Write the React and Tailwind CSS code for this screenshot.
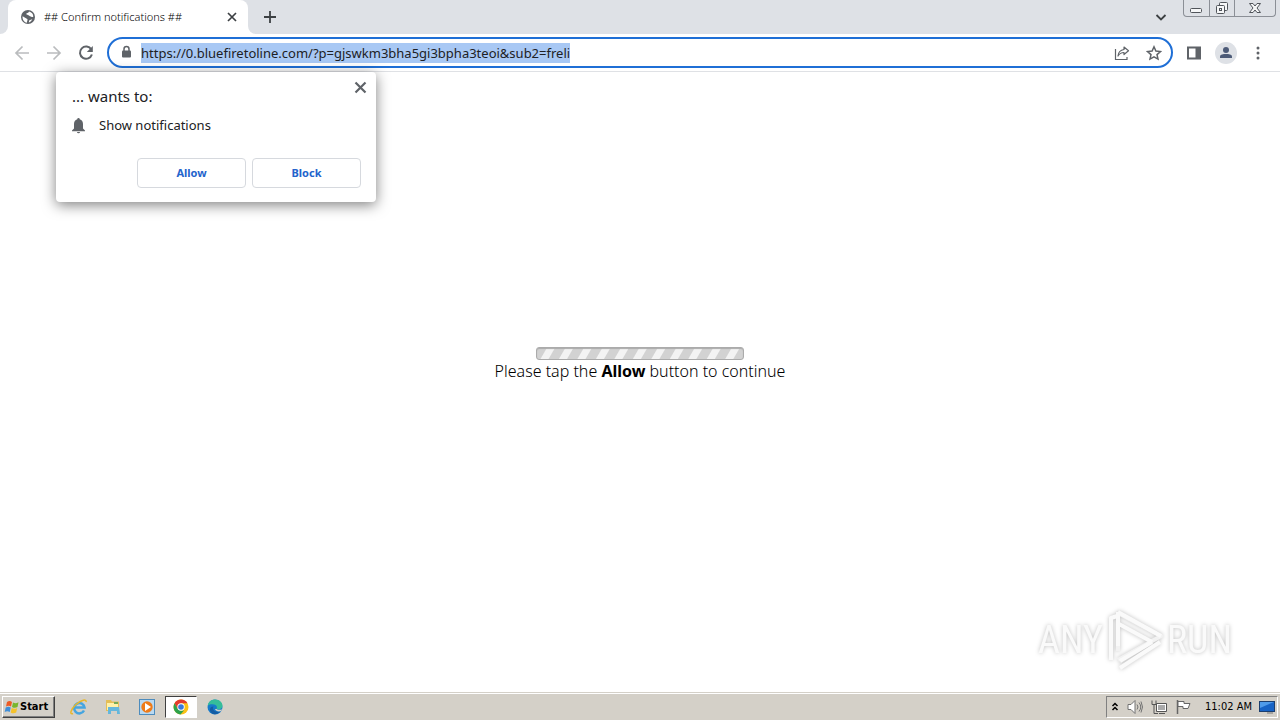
import React from "react";

const url = "https://0.bluefiretoline.com/?p=gjswkm3bha5gi3bpha3teoi&sub2=freli";

function Globe() {
  return (
    <svg className="size-4 shrink-0" viewBox="0 0 16 16" aria-hidden="true">
      <circle cx="8" cy="8" r="7" fill="#5f6368" />
      <path d="M2.6 7.2 6 9.2c1.200.6 1.700.8 1.500 1.800L6.800 13.800C4 13 2.200 10.600 2.600 7.200ZM9 2.500c-.3 1.500-1.300 1.300-2.300 1.700-.8.4-.3 1.500.6 1.600 1.500.2 1.500 1 2.700 1.400 1.500.4 1.800 1.200 3.300.6C13.400 5 11.500 3 9 2.500Zm.3 8.700c1.200-.2 1.800-1 3-1-.7 1.600-1.800 2.700-3.500 3.200Z" fill="#fff" />
    </svg>
  );
}

function TabStrip() {
  return (
    <header className="flex h-[34px] shrink-0 bg-[#dee1e6]">
      <div className="w-2 shrink-0 bg-white">
        <div className="h-full rounded-br-lg bg-[#dee1e6]" />
      </div>
      <div className="flex w-60 shrink-0 items-center rounded-t-lg bg-white pr-2 pl-3">
        <Globe />
        <span className="ml-2 flex-1 whitespace-nowrap text-[11px] font-light text-black">## Confirm notifications ##</span>
        <button aria-label="Close tab" className="flex size-4 items-center justify-center">
          <svg className="size-4" viewBox="0 0 16 16" fill="none" stroke="#3c4043" strokeWidth="1.700"><path d="m4 4 8 8m0-8-8 8" /></svg>
        </button>
      </div>
      <div className="w-2 shrink-0 bg-white">
        <div className="h-full rounded-bl-lg bg-[#dee1e6]" />
      </div>
      <button aria-label="New tab" className="ml-1 flex w-5 items-center justify-center">
        <svg className="size-4" viewBox="0 0 16 16" fill="none" stroke="#3c4043" strokeWidth="1.800"><path d="M8 2v12M2 8h12" /></svg>
      </button>
      <div className="flex-1" />
      <button aria-label="Search tabs" className="mr-3 flex w-5 items-center justify-center">
        <svg className="size-4" viewBox="0 0 16 16" fill="none" stroke="#3c4043" strokeWidth="1.800"><path d="m3.500 6 4.500 4.500L12.500 6" /></svg>
      </button>
      <div className="mr-1 flex h-[17px] w-[93px] rounded-b border border-t-0 border-[#8b8f96]">
        <button aria-label="Minimize" className="flex flex-1 items-center justify-center border-r border-[#8b8f96]">
          <svg className="h-4 w-5" viewBox="0 0 20 16" fill="#f5f6f7" stroke="#50545a"><rect x="4.500" y="8.500" width="11" height="4" rx="1" /></svg>
        </button>
        <button aria-label="Restore" className="flex flex-1 items-center justify-center border-r border-[#8b8f96]">
          <svg className="h-4 w-4" viewBox="0 0 16 16" fill="#f5f6f7" stroke="#50545a"><rect x="5.500" y="2.500" width="8" height="8" rx="1" /><rect x="2.500" y="5.500" width="8" height="8" rx="1" /><rect x="5.500" y="8.500" width="2" height="2" /></svg>
        </button>
        <button aria-label="Close window" className="flex w-10 items-center justify-center">
          <svg className="h-4 w-4" viewBox="0 0 16 16" fill="#f5f6f7" stroke="#50545a"><path d="M2.500 3.500h3.500l2 2.500 2-2.500h3.500L10 8l3.500 4.500H10L8 10l-2 2.500H2.500L6 8Z" /></svg>
        </button>
      </div>
    </header>
  );
}

function Toolbar() {
  return (
    <div className="flex h-[38px] shrink-0 items-center border-b border-[#dfe1e5] bg-white px-3">
      <button aria-label="Back" className="flex size-5 items-center justify-center">
        <svg className="size-4" viewBox="0 0 16 16" fill="none" stroke="#babcbe" strokeWidth="1.700"><path d="M15 8H2m6.500-6.500L2 8l6.500 6.500" /></svg>
      </button>
      <button aria-label="Forward" className="ml-3 flex size-5 items-center justify-center">
        <svg className="size-4" viewBox="0 0 16 16" fill="none" stroke="#babcbe" strokeWidth="1.700"><path d="M1 8h13M7.500 1.500 14 8l-6.500 6.500" /></svg>
      </button>
      <button aria-label="Reload" className="ml-3 flex size-5 items-center justify-center">
        <svg className="size-4" viewBox="0 0 16 16"><path d="M13.300 4.500A6.100 6.100 0 1 0 13.900 9.500" fill="none" stroke="#5f6368" strokeWidth="2" /><path d="M14.800 1v6H8.800Z" fill="#5f6368" /></svg>
      </button>
      <div className="ml-[11px] flex h-[31px] min-w-0 flex-1 items-center rounded-full border-2 border-[#1f6fd6] bg-white pr-[7px] pl-3">
        <svg className="mr-2 h-4 w-3 shrink-0" viewBox="0 0 12 16" aria-hidden="true"><rect x="1" y="5.500" width="9" height="7" rx="1" fill="#5f6368" /><path d="M3 6.500V4a2.500 2.500 0 0 1 5 0v2.500" fill="none" stroke="#5f6368" strokeWidth="1.500" /></svg>
        <input aria-label="Address and search bar" className="field-sizing-content h-5 min-w-0 bg-[#a8c8f4] text-[13px] text-[#202124] outline-none" defaultValue={url} />
        <div className="flex-1" />
        <button aria-label="Share" className="flex size-5 shrink-0 items-center justify-center">
          <svg className="size-4" viewBox="0 0 16 16" fill="none" stroke="#5f6368" strokeWidth="1.200"><path d="M1.500 4v10.500h11.500V12" /><path d="M10 2 14.500 5.800 10 9.500v-2C7 7.500 5.500 8.500 4 11c.3-3.500 2.500-6 6-6.500Z" strokeLinejoin="round" /></svg>
        </button>
        <button aria-label="Bookmark this page" className="ml-3 flex size-5 shrink-0 items-center justify-center">
          <svg className="size-4" viewBox="0 0 16 16" fill="none" stroke="#5f6368" strokeWidth="1.500"><path d="m8 1.800 1.900 4.200 4.600.5-3.500 3.100 1 4.500L8 11.800l-4 2.300 1-4.500L1.500 6.500 6.100 6Z" /></svg>
        </button>
      </div>
      <button aria-label="Side panel" className="ml-[11px] flex size-5 items-center justify-center">
        <svg className="size-4" viewBox="0 0 16 16"><path d="M1 1.500h14v13H1Zm2 2v9h6.500v-9Z" fill="#5f6368" fillRule="evenodd" /></svg>
      </button>
      <button aria-label="Profile" className="ml-[11px] flex size-[22px] items-center justify-center rounded-full bg-[#dee1e6]">
        <svg className="size-4" viewBox="0 0 16 16" fill="#4d5b78"><circle cx="8" cy="5" r="3" /><path d="M2 13v-1.500C2 9.500 5.500 9 8 9s6 .5 6 2.500V13Z" /></svg>
      </button>
      <button aria-label="Menu" className="ml-[11px] flex size-5 items-center justify-center">
        <svg className="size-4" viewBox="0 0 16 16" fill="#5f6368"><circle cx="8" cy="3" r="1.500" /><circle cx="8" cy="8" r="1.500" /><circle cx="8" cy="13" r="1.500" /></svg>
      </button>
    </div>
  );
}

function PermissionPrompt() {
  return (
    <section role="dialog" aria-label="Permission request" className="absolute top-0 left-14 w-80 rounded-sm bg-white px-4 pt-4 pb-[14px] shadow-[0_3px_14px_rgba(0,0,0,0.5)]">
      <button aria-label="Close" className="absolute top-2 right-2 flex size-4 items-center justify-center">
        <svg className="size-4" viewBox="0 0 16 16" fill="none" stroke="#5f6368" strokeWidth="2.200"><path d="m3.500 2.500 10 10m0-10-10 10" /></svg>
      </button>
      <p className="text-[15px] leading-4 text-[#202124]">... wants to:</p>
      <div className="mt-2.5 flex h-6 items-center">
        <svg className="-ml-px size-4" viewBox="0 0 16 16" fill="#5f6368" aria-hidden="true"><path d="M7.500 0a1.200 1.200 0 0 0-1.200 1.300C4 2 3 3.800 3 6v4.500L1 12.500v.7h13v-.7l-2-2V6c0-2.200-1-4-3.300-4.700A1.200 1.200 0 0 0 7.500 0ZM6 14a1.500 1.300 0 0 0 3 0Z" /></svg>
        <span className="ml-3 text-[13px] text-[#202124]">Show notifications</span>
      </div>
      <div className="mt-5 flex justify-end gap-1.5">
        <button className="h-[30px] w-[109px] rounded border border-[#d6d9de] text-[11px] font-bold text-[#2464cc]">Allow</button>
        <button className="-mr-px h-[30px] w-[109px] rounded border border-[#d6d9de] text-[11px] font-bold text-[#2464cc]">Block</button>
      </div>
    </section>
  );
}

function Watermark() {
  return (
    <div className="absolute right-12 bottom-5 flex items-center gap-0.5 font-['Liberation_Sans_Narrow','Roboto_Condensed',sans-serif] text-[38px] leading-none text-[#fafafa] [filter:drop-shadow(0_0_2px_rgba(0,0,0,0.25))]">
      <span>ANY</span>
      <svg className="h-16 w-[60px]" viewBox="0 0 60 64" fill="none" strokeLinejoin="round" aria-hidden="true">
        <path d="M6 9v43M13 5v38M13 5l43 23-43 24" stroke="#f2f2f2" strokeWidth="4" />
        <path d="M6 52V10l6-2M13 4v34M13 4l43 24M14 16l33 18M47 34 15 53M55 34 15 60" stroke="#fafafa" strokeWidth="4" />
      </svg>
      <span>RUN</span>
    </div>
  );
}

function Page() {
  return (
    <main className="relative flex flex-1 flex-col items-center bg-white pt-[275px]">
      <div role="progressbar" aria-label="Loading" className="h-[13px] w-52 rounded-[3px] border border-[#ababab] bg-[repeating-linear-gradient(120deg,#d2d2d2_0px,#d2d2d2_8px,#f3f3f3_9px,#f3f3f3_15px,#d2d2d2_16px)] shadow-[inset_0_1px_1px_#aaa]" />
      <p className="text-[16px] leading-[22px] font-light text-black">
        Please tap the <b className="font-bold">Allow</b> button to continue
      </p>
      <PermissionPrompt />
      <Watermark />
    </main>
  );
}

function Taskbar() {
  return (
    <footer className="flex h-7 shrink-0 items-center border-t border-[#d4d0c8] bg-[#d4d0c8] px-0.5 font-['DejaVu_Sans_Condensed','DejaVu_Sans',sans-serif] text-[11px] leading-4 text-black shadow-[inset_0_1px_0_#fff]">
      <button className="flex h-[22px] w-[53px] items-center border border-t-white border-r-[#404040] border-b-[#404040] border-l-white pl-px font-bold shadow-[inset_-1px_-1px_0_#808080]">
        <svg className="size-4 shrink-0" viewBox="0 0 16 16" aria-hidden="true">
          <path d="M3 3c2-1.500 3.500-1.200 5 0L7 7.500C5.500 6.500 4 6.500 2 7.500Z" fill="#ed5b24" />
          <path d="M9 3.500c2 1 3.500.9 5.500-.3L13.500 8c-2 1.200-3.600 1-5.500-.1Z" fill="#79b62e" />
          <path d="M1.700 8.500c2-1 3.500-1 5 0L5.800 13C4 12 2.500 12 .7 13Z" fill="#3f8ed8" />
          <path d="M7.700 9c2 1 3.500 1 5.500-.1L12.200 13.500c-2 1-3.700 1-5.500-.1Z" fill="#f5c22b" />
        </svg>
        <span>Start</span>
      </button>
      <nav aria-label="Quick launch" className="ml-2 flex items-center gap-0.5">
        <button aria-label="Internet Explorer" className="flex h-[22px] w-8 items-center justify-center">
          <svg className="size-[18px]" viewBox="0 0 18 18" fill="none"><path d="M14 12.500A5.200 5.200 0 1 1 14.500 9.500H5" stroke="#45a5e0" strokeWidth="2.500" /><path d="M3 15.500C-1 17 1 11 6 6.500 11 2 17 .5 16 4" stroke="#e9b72a" strokeWidth="1.500" /></svg>
        </button>
        <button aria-label="File Explorer" className="flex h-[22px] w-8 items-center justify-center">
          <svg className="size-4" viewBox="0 0 16 16"><path d="M1 1h5l1 1.500h7V12H1Z" fill="#e4be57" /><path d="M2 4h11v7H2Z" fill="#fff1a8" /><path d="M3 8h11l1 7h-3v-3H6v3H3Z" fill="#65b7dc" /><path d="M9 3h4v2H9Z" fill="#76aa58" /></svg>
        </button>
        <button aria-label="Media Player" className="flex h-[22px] w-8 items-center justify-center">
          <svg className="size-4" viewBox="0 0 16 16"><rect x=".5" y=".5" width="15" height="15" fill="#b9d9f1" stroke="#4d8cbd" /><circle cx="8" cy="8" r="5.700" fill="#ee7b18" /><path d="m6 4 6 4-6 4Z" fill="#fff" /></svg>
        </button>
        <button aria-label="Google Chrome" className="flex h-[22px] w-8 items-center justify-center border border-t-[#404040] border-r-white border-b-white border-l-[#404040] bg-white">
          <svg className="size-4 shrink-0" viewBox="0 0 16 16"><circle cx="8" cy="8" r="7.500" fill="#fbc116" /><path d="M1.500 4.300A7.500 7.500 0 0 1 14.500 4.300H8L4.700 10Z" fill="#e33b2e" /><path d="M1.500 4.300 4.800 10 8 11.500h3L7.500 15.500A7.500 7.500 0 0 1 1.500 4.300Z" fill="#2ca24c" /><circle cx="8" cy="8" r="3.700" fill="#fff" /><circle cx="8" cy="8" r="2.800" fill="#3979dc" /></svg>
        </button>
        <button aria-label="Microsoft Edge" className="flex h-[22px] w-8 items-center justify-center">
          <svg className="size-4" viewBox="0 0 16 16"><circle cx="8" cy="8" r="7.500" fill="#167acb" /><path d="M.7 7C1.300 2.500 4.500.5 8 .5c4.500 0 7.500 3 7.500 6.200 0 3-3.500 4.300-6 3.300 1-1.500.5-4-2.500-4.500C4 5 1.500 5.500.7 7Z" fill="#35bd9a" /><path d="M6.500 7.500C5 10 7 13.500 13 12.500 10 16.500 4 16 3 11.500 2.700 9 4 7.500 6.500 7.500Z" fill="#145ca3" /><path d="M9.500 10c1.500 1.200 4 1 5.700.2l-1 1.800C12 12.800 8.500 12.500 8 10Z" fill="#d4d0c8" /></svg>
        </button>
      </nav>
      <div className="flex-1" />
      <div className="flex h-[22px] items-center border border-t-[#808080] border-r-white border-b-white border-l-[#808080]">
        <button aria-label="Show hidden icons" className="flex w-4 items-center justify-center">
          <svg className="h-3 w-2" viewBox="0 0 8 12" fill="none" stroke="#000" strokeWidth="1.500"><path d="m1.500 5 2.500-2.500L6.500 5m-5 4L4 6.500 6.500 9" /></svg>
        </button>
        <div className="ml-1 flex items-center gap-2">
          <svg className="size-4" viewBox="0 0 16 16" fill="#fff" stroke="#727272"><path d="M1 5.500h3l4-4v13l-4-4H1Z" /><path d="M10 5.500q2 2.500 0 5m2-7q3.500 4.500 0 9m2-10q3 5.500 0 11" fill="none" /></svg>
          <svg className="size-4" viewBox="0 0 16 16" fill="#fff" stroke="#555"><path d="M5.500 4.500h10v8h-10ZM8 14.500h6" /><path d="M7 6h7v5H7Z" fill="#aaa" stroke="none" /><path d="M1 1.500v4h4v-4M3 5.500v9h4" fill="none" /></svg>
          <svg className="size-4" viewBox="0 0 16 16" fill="#fff" stroke="#666"><path d="M2.500 1v14" strokeWidth="1.500" /><path d="M3 2.500h6v2h6l-2 5H8v-2H3Z" /></svg>
        </div>
        <time className="ml-[14px] whitespace-nowrap">11:02 AM</time>
        <button aria-label="Show desktop" className="ml-[7px] flex w-[18px] items-center">
          <svg className="size-4" viewBox="0 0 16 16"><rect x=".5" y="2.500" width="15" height="10" fill="#1763c5" stroke="#1b3e6e" /><path d="M1 3h14L1 9Z" fill="#4f9bea" /><path d="M8 14h6" stroke="#777" /></svg>
        </button>
      </div>
    </footer>
  );
}

export default function App() {
  return (
    <div className="flex min-h-screen flex-col bg-white font-['Noto_Sans',sans-serif]">
      <TabStrip />
      <Toolbar />
      <Page />
      <Taskbar />
    </div>
  );
}
